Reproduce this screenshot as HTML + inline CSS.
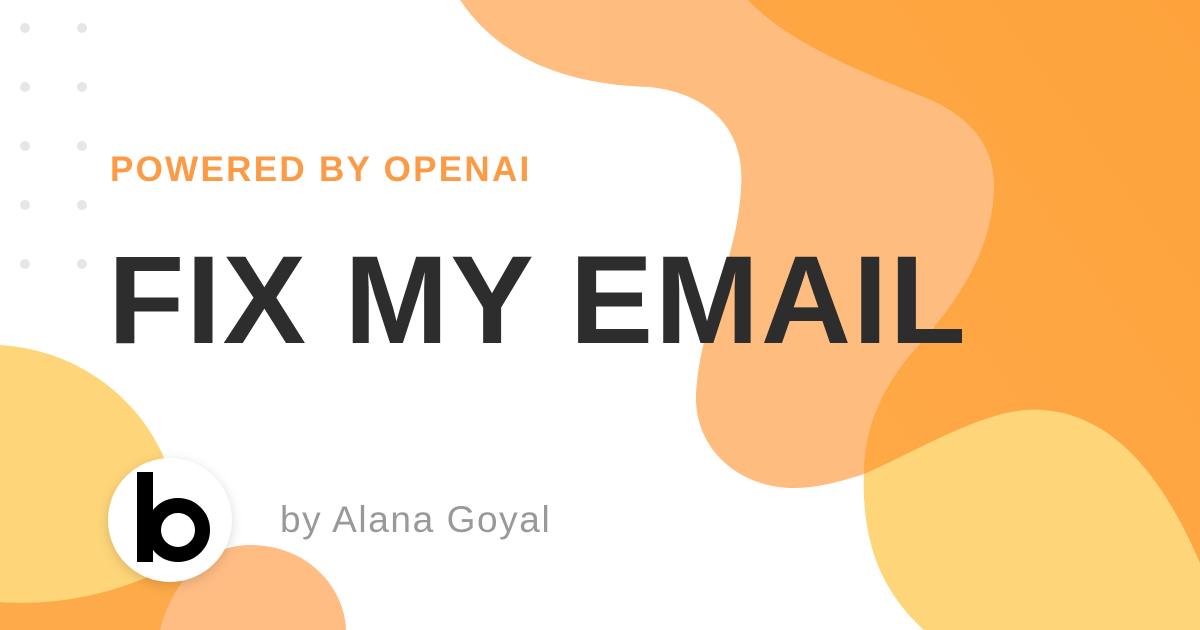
<!DOCTYPE html>
<html><head><style>
html,body{margin:0;padding:0;}
body{width:1200px;height:630px;position:relative;overflow:hidden;background:#fff;font-family:"Liberation Sans",sans-serif;}
svg{position:absolute;left:0;top:0;}
.t1{position:absolute;left:110px;top:150px;font-size:35px;font-weight:bold;color:#fc9a45;letter-spacing:2.3px;white-space:nowrap;}
.t2{position:absolute;left:108px;top:232px;font-size:125px;font-weight:bold;color:#2d2d2d;letter-spacing:1.8px;white-space:nowrap;line-height:1.1;}
.t3{position:absolute;left:280px;top:499px;font-size:37px;color:#999;letter-spacing:1.6px;white-space:nowrap;}
.logo{position:absolute;left:108px;top:458px;width:124px;height:124px;border-radius:50%;background:#fff;box-shadow:0 3px 12px rgba(0,0,0,0.15);}
</style></head><body>
<svg width="1200" height="630" viewBox="0 0 1200 630">
<defs>
<linearGradient id="g1" x1="0" y1="0" x2="1" y2="0"><stop offset="0" stop-color="#ffbd7f"/><stop offset="1" stop-color="#ffbb7f"/></linearGradient>
<linearGradient id="g2" x1="0" y1="1" x2="1" y2="0"><stop offset="0" stop-color="#feaa4a"/><stop offset="1" stop-color="#fea33c"/></linearGradient>
</defs>
<path d="M460 0 C500 60 570 85 650 87 C720 95 745 140 741 187 C738 260 700 320 696 394 C694 450 740 488 794 488 C820 488 845 480 864 474 L1200 474 L1200 0 Z" fill="url(#g1)"/>
<path d="M748 0 C790 45 870 75 931 100 C975 120 995 150 994 189 C992 250 960 300 910 355 C880 392 864 430 864 474 C862 540 880 590 924 630 L1200 630 L1200 0 Z" fill="url(#g2)"/>
<path d="M924 630 C880 590 862 540 864 474 C920 450 990 405 1043 410 C1110 415 1160 470 1200 563 L1200 630 Z" fill="#fed679"/>
<path d="M0 590 L0 630 L200 630 L200 560 Z" fill="#fdab4a"/>
<path d="M0 345 C80 350 140 400 165 460 C190 520 200 560 140 580 C90 600 40 605 0 602 Z" fill="#fed679"/>
<path d="M160 630 C170 590 200 545 250 545 C310 545 345 590 346 630 Z" fill="#ffbd84"/>
<g fill="#e6e6e6">
<circle cx="25" cy="28" r="5"/><circle cx="82" cy="28" r="5"/>
<circle cx="25" cy="87" r="5"/><circle cx="82" cy="87" r="5"/>
<circle cx="25" cy="146" r="5"/><circle cx="82" cy="146" r="5"/>
<circle cx="25" cy="205" r="5"/><circle cx="82" cy="205" r="5"/>
<circle cx="25" cy="264" r="5"/><circle cx="82" cy="264" r="5"/>
</g>
</svg>
<div class="t1">POWERED BY OPENAI</div>
<div class="t2">FIX MY EMAIL</div>
<div class="logo"><svg width="124" height="124" viewBox="0 0 124 124" style="position:absolute;left:0;top:0">
<rect x="29" y="14" width="16" height="90" fill="#000"/>
<circle cx="70" cy="72" r="24.5" fill="none" stroke="#000" stroke-width="15"/>
</svg></div>
<div class="t3">by Alana Goyal</div>
</body></html>
